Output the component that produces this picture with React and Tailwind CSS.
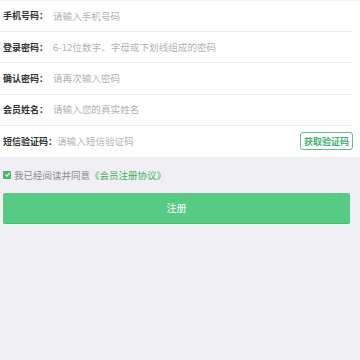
import React, { useState } from 'react';

const rows = [
  { label: '手机号码：', placeholder: '请输入手机号码', type: 'tel' },
  { label: '登录密码：', placeholder: '6-12位数字、字母或下划线组成的密码', type: 'password' },
  { label: '确认密码：', placeholder: '请再次输入密码', type: 'password' },
  { label: '会员姓名：', placeholder: '请输入您的真实姓名', type: 'text' },
];

export default function App() {
  const [agree, setAgree] = useState(true);

  return (
    <div className="min-h-[360px] bg-[#efeff4] font-['Noto_Sans_CJK_SC',sans-serif]">
      {/* form */}
      <div className="bg-white border-t border-[#f4f4f4]">
        {rows.map((r) => (
          <div
            key={r.label}
            className="h-[31.2px] mr-[7px] pl-[3px] flex items-center border-b border-[#ececec]"
          >
            <span className="w-[50px] shrink-0 whitespace-nowrap text-[9px] font-bold text-[#333]">
              {r.label}
            </span>
            <input
              type={r.type}
              placeholder={r.placeholder}
              className="flex-1 min-w-0 bg-transparent text-[9.6px] text-[#333] placeholder:text-[#b3b3b3] outline-none"
            />
          </div>
        ))}
        <div className="h-[31.2px] mr-[7px] pl-[3px] flex items-center">
          <span className="shrink-0 whitespace-nowrap text-[9px] font-bold text-[#333]">
            短信验证码：
          </span>
          <input
            type="text"
            placeholder="请输入短信验证码"
            className="flex-1 min-w-0 bg-transparent text-[9.6px] text-[#333] placeholder:text-[#b3b3b3] outline-none"
          />
          <button className="h-[18px] px-[3px] border border-[#5cc286] rounded-[3px] text-[9px] font-bold text-[#46b36f] whitespace-nowrap leading-none">
            获取验证码
          </button>
        </div>
      </div>

      {/* agreement */}
      <div className="h-[36px] pl-[3px] flex items-center text-[9.5px]">
        <button
          onClick={() => setAgree(!agree)}
          className={`w-[8px] h-[8px] mr-[3px] rounded-[1px] flex items-center justify-center ${agree ? 'bg-[#49b56f]' : 'bg-white border border-[#ccc]'}`}
        >
          {agree && (
            <svg viewBox="0 0 10 10" className="w-[7px] h-[7px]">
              <path d="M2 5.2 L4.2 7.3 L8.2 2.8" fill="none" stroke="white" strokeWidth="1.6" />
            </svg>
          )}
        </button>
        <span className="text-[#8a8a8a]">我已经阅读并同意</span>
        <span className="text-[#3fae66]">《会员注册协议》</span>
      </div>

      {/* submit */}
      <button className="ml-[3px] w-[347px] h-[31px] bg-[#55cb83] border-b border-[#4bb874] rounded-[2px] text-white text-[10px] flex items-center justify-center">
        注册
      </button>
    </div>
  );
}
